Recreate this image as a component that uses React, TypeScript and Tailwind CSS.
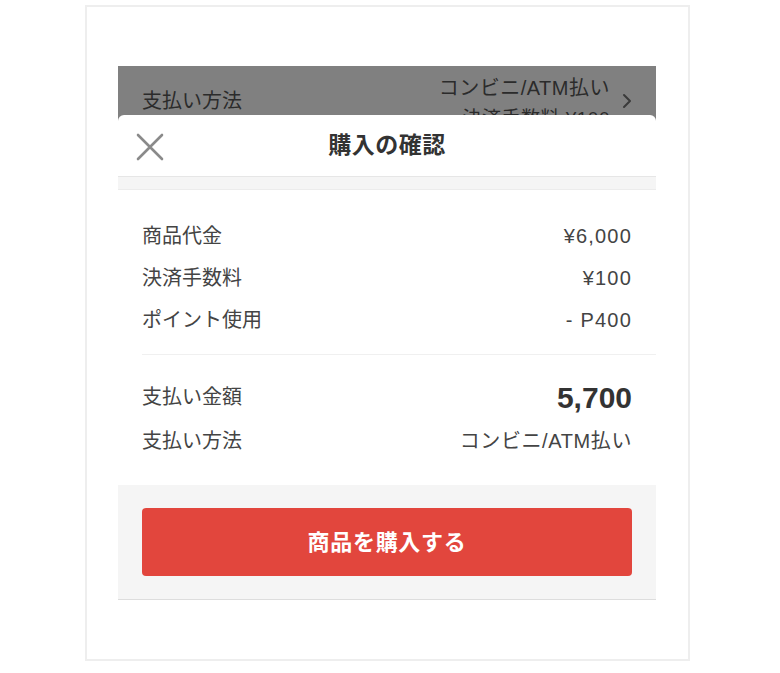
import React from 'react';

const font = { fontFamily: '"Liberation Sans", "Noto Sans CJK JP", sans-serif' };

// Rows in the price breakdown
const breakdown = [
  { label: '商品代金', value: '¥6,000' },
  { label: '決済手数料', value: '¥100' },
  { label: 'ポイント使用', value: '- P400' },
];

function CloseIcon() {
  return (
    <svg width="28" height="28" viewBox="0 0 28 28" fill="none">
      <path d="M2 2 L26 26 M26 2 L2 26" stroke="#8a8a8a" strokeWidth="2.6" strokeLinecap="round" />
    </svg>
  );
}

function Chevron() {
  return (
    <svg width="10" height="16" viewBox="0 0 10 16" fill="none">
      <path d="M2 2 L8 8 L2 14" stroke="#3a3a3a" strokeWidth="2" strokeLinecap="round" strokeLinejoin="round" />
    </svg>
  );
}

export default function App() {
  return (
    <div className="w-[780px] h-[673px] bg-white pt-[5px] pl-[85px]" style={font}>
      <div className="w-[605px] h-[656px] border-2 border-[#eeeeee] pt-[59px] pl-[31px]">
        <div className="w-[538px] bg-[#808080]">
          {/* dimmed page behind the sheet */}
          <div className="h-[49px] overflow-hidden flex justify-between pl-[24px] pr-[24px]">
            <div className="mt-[22px] text-[20px] leading-[26px] text-[#2b2b2b]">支払い方法</div>
            <div className="flex items-start gap-[12px]">
              <div className="flex flex-col items-end text-[#2b2b2b] mt-[9px]">
                <span className="text-[20px] leading-[26px] tracking-[0.5px]">コンビニ/ATM払い</span>
                <span className="text-[19px] leading-[24px] mt-[6px] tracking-[0.5px]">決済手数料 ¥100</span>
              </div>
              <div className="mt-[27px]">
                <Chevron />
              </div>
            </div>
          </div>

          {/* Confirmation sheet */}
          <div className="bg-white rounded-t-[6px]">
            <div className="relative h-[62px] flex items-center justify-center border-b border-[#e6e6e6]">
              <button className="absolute left-[18px] top-[18px]">
                <CloseIcon />
              </button>
              <h2 className="text-[23px] font-bold text-[#333333] tracking-[0.5px]">購入の確認</h2>
            </div>
            <div className="h-[13px] bg-[#f5f5f5] border-b border-[#ececec]" />

            <div className="px-[24px] pt-[25px] pb-[13px]">
              {breakdown.map((row) => (
                <div key={row.label} className="h-[42px] flex items-center justify-between text-[20px] text-[#444444]">
                  <span>{row.label}</span>
                  <span className="tracking-[1.2px]">{row.value}</span>
                </div>
              ))}
            </div>
            <div className="ml-[24px] h-px bg-[#f0f0f0]" />

            <div className="px-[24px] pt-[20px] pb-[22px]">
              <div className="h-[44px] flex items-center justify-between text-[20px] text-[#444444]">
                <span>支払い金額</span>
                <span className="text-[30px] font-bold text-[#333333]">5,700</span>
              </div>
              <div className="h-[44px] flex items-center justify-between text-[20px] text-[#444444]">
                <span>支払い方法</span>
                <span className="tracking-[0.6px]">コンビニ/ATM払い</span>
              </div>
            </div>

            <div className="bg-[#f5f5f5] px-[24px] py-[23px] border-b border-[#dddddd]">
              <button className="w-full h-[68px] rounded-[4px] bg-[#e2463d] text-white text-[22px] font-bold tracking-[0.7px]">
                商品を購入する
              </button>
            </div>
          </div>
        </div>
      </div>
    </div>
  );
}
